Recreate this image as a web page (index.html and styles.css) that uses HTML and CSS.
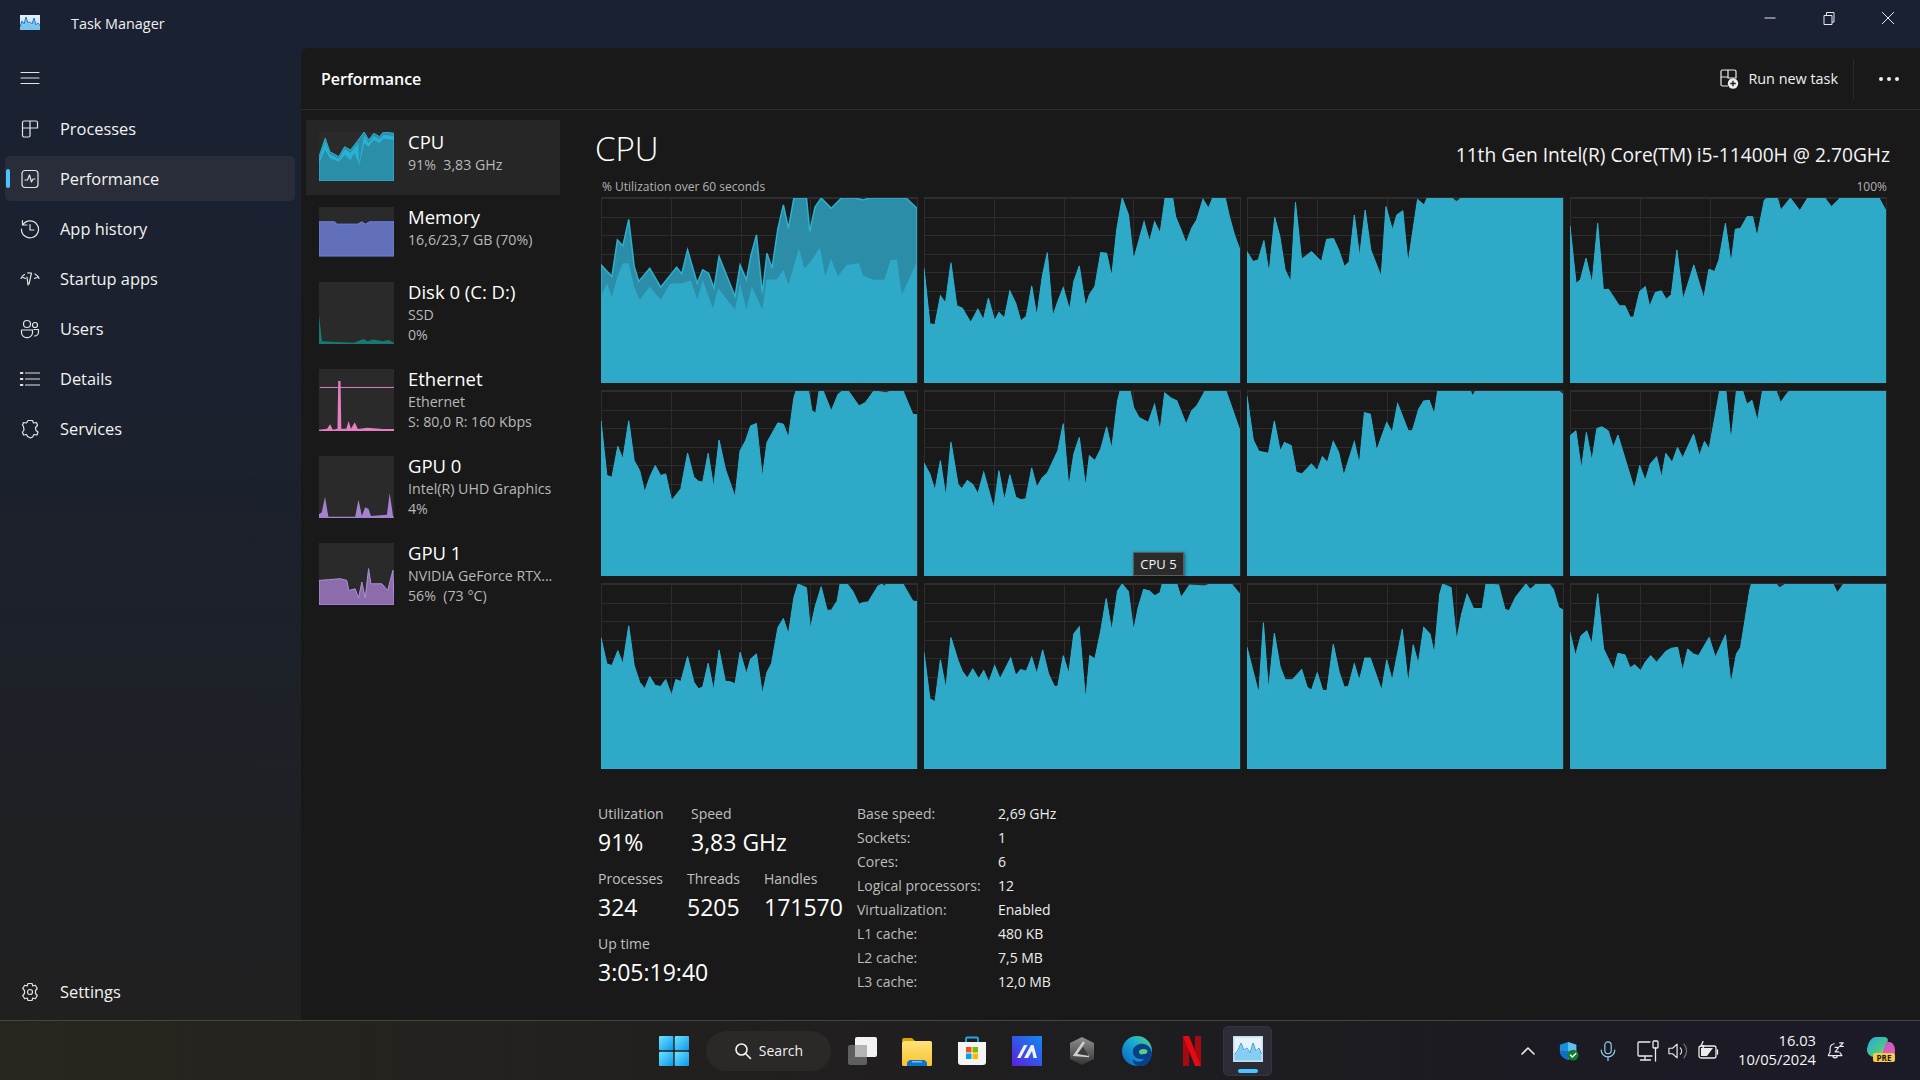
FILE: index.html
```html
<!DOCTYPE html>
<html lang="en">
<head>
<meta charset="utf-8">
<title>Task Manager</title>
<link rel="stylesheet" href="styles.css">
</head>
<body>
<svg class="defs" aria-hidden="true">
  <defs>
    <linearGradient id="winG" x1="0" y1="0" x2="1" y2="1"><stop offset="0" stop-color="#6fe3fb"/><stop offset="1" stop-color="#0c97ee"/></linearGradient>
    <linearGradient id="folderG" x1="0" y1="0" x2="0" y2="1"><stop offset="0" stop-color="#ffe27a"/><stop offset="1" stop-color="#f8c22e"/></linearGradient>
    <linearGradient id="mG" x1="0" y1="1" x2="1" y2="0"><stop offset="0" stop-color="#5a1fe0"/><stop offset="1" stop-color="#0f8bf0"/></linearGradient>
    <linearGradient id="edgeG" x1="0" y1="1" x2="1" y2="0"><stop offset="0" stop-color="#0c5fb8"/><stop offset=".55" stop-color="#17a6d8"/><stop offset="1" stop-color="#55d67a"/></linearGradient>
    <linearGradient id="hexG" x1="0" y1="0" x2="0" y2="1"><stop offset="0" stop-color="#8f8f8f"/><stop offset="1" stop-color="#343434"/></linearGradient>
    <linearGradient id="copA" x1="0" y1="0" x2="1" y2="1"><stop offset="0" stop-color="#2aa7e8"/><stop offset=".6" stop-color="#45c88a"/><stop offset="1" stop-color="#e4d33a"/></linearGradient>
    <linearGradient id="copB" x1="0" y1="0" x2="1" y2="1"><stop offset="0" stop-color="#b45be8"/><stop offset="1" stop-color="#f0609a"/></linearGradient>
    <linearGradient id="tmG" x1="0" y1="0" x2="0" y2="1"><stop offset="0" stop-color="#e4f0f8"/><stop offset="1" stop-color="#b9d6ea"/></linearGradient>
  </defs>
</svg>

<div class="app">
  <div class="window">
    <header class="titlebar">
      <svg class="app-icon" viewBox="0 0 20 15"><rect width="20" height="15" fill="url(#tmG)"/><polygon points="0,13 2,7 4,10 6,3 8,9 10,8 12,10 14,4 16,11 18,9 20,12 20,15 0,15" fill="#7cc4ee"/><polyline points="0,12 2,6 4,9 6,2 8,8 10,7 12,9 14,3 16,10 18,8 20,11" fill="none" stroke="#1c78d4" stroke-width="1"/></svg>
      <span class="app-title">Task Manager</span>
      <div class="win-controls">
        <svg class="win-btn" viewBox="0 0 16 16"><path d="M2.500 8h11" /></svg>
        <svg class="win-btn" viewBox="0 0 16 16"><path d="M3 5.500h8v9H3zM5.500 5.500V2.500H13v9.500h-2"/></svg>
        <svg class="win-btn" viewBox="0 0 16 16"><path d="M2 2l12 12M14 2L2 14"/></svg>
      </div>
    </header>

    <div class="body">
      <nav class="sidebar">
        <div class="hamburger">
          <svg class="nav-icon" viewBox="0 0 20 20"><path d="M1 4.500h18M1 10h18M1 15.500h18"/></svg>
        </div>
        <ul class="nav-list">
          <li class="nav-item">
            <svg class="nav-icon" viewBox="0 0 20 20"><path d="M2.500 3.500a1.500 1.500 0 0 1 1.500-1.500h12a1.500 1.500 0 0 1 1.500 1.500v5.500h-7.500v-7M2.500 3.500v13a1.500 1.500 0 0 0 1.500 1.500h4.500a1.500 1.500 0 0 0 1.500-1.500v-7.500H2.500"/></svg>
            <span>Processes</span>
          </li>
          <li class="nav-item active">
            <svg class="nav-icon" viewBox="0 0 20 20"><rect x="2" y="1.500" width="16" height="17" rx="3"/><path d="M5 11h2.500l2-5 2 7 1.500-3h2"/></svg>
            <span>Performance</span>
          </li>
          <li class="nav-item">
            <svg class="nav-icon" viewBox="0 0 20 20"><path d="M3 5.500a8.500 8.500 0 1 1-1.500 4.500M2.500 1.500v4.500h4.500M10 5.500V11h4"/></svg>
            <span>App history</span>
          </li>
          <li class="nav-item">
            <svg class="nav-icon" viewBox="0 0 20 20"><path d="M1 9.500A9 9 0 0 1 4.500 5.500M19 9.500A9 9 0 0 0 15 5M7.500 4a8 8 0 0 1 3 0M11.500 4L9 15M7 8l1 8M3 8.500l2.500 1M17 8.500l-2.500 1"/></svg>
            <span>Startup apps</span>
          </li>
          <li class="nav-item">
            <svg class="nav-icon" viewBox="0 0 20 20"><circle cx="7" cy="5" r="3.500"/><circle cx="15" cy="6" r="2.500"/><path d="M1.500 11h11v3a5 5 0 0 1-5.500 4.500 5 5 0 0 1-5.500-4.500zM14 10.500h4.500v2.500a4 4 0 0 1-4 4"/></svg>
            <span>Users</span>
          </li>
          <li class="nav-item">
            <svg class="nav-icon" viewBox="0 0 20 20"><path d="M5.500 4H19.500M5.500 10H19.500M5.500 16H19.500"/><path class="dots" d="M.5 4h2M.5 10h2M.5 16h2"/></svg>
            <span>Details</span>
          </li>
          <li class="nav-item">
            <svg class="nav-icon" viewBox="0 0 20 20"><path d="M8 1.500h4.500l1 2.500 3-.5 1 3-2 2 .5 3 2 1.500-1 3-3-.5-1.500 2.500-2 1-3-1.500-1-2-3 .5-1-3 1.500-2-.5-3.500L2.500 6l1-2.500 3 .5z"/></svg>
            <span>Services</span>
          </li>
        </ul>
        <div class="nav-item settings">
          <svg class="nav-icon" viewBox="0 0 20 20"><circle cx="10" cy="10" r="2.500"/><path d="M8 1.500h4l.8 2.500 2.500-.8 2 3.300-1.800 2 0 3 1.800 2-2 3.300-2.500-.8-.8 2.500H8l-.8-2.500-2.500.8-2-3.300 1.800-2 0-3-1.800-2 2-3.300 2.500.8z"/></svg>
          <span>Settings</span>
        </div>
      </nav>

      <main class="panel">
        <div class="panel-head">
          <h1 class="panel-title">Performance</h1>
          <div class="panel-actions">
            <svg class="run-icon" viewBox="0 0 20 20"><path d="M2 12V2.500A1.500 1.500 0 0 1 3.500 1h12A1.500 1.500 0 0 1 17 2.500V9H9V1M2 8h7M2 9v6.500A1.500 1.500 0 0 0 3.500 17H9"/><circle class="run-plus-bg" cx="14" cy="14.500" r="5.200"/><path class="run-plus" d="M14 11.800v5.400M11.300 14.500h5.400"/></svg>
            <span class="run-text">Run new task</span>
            <span class="divider"></span>
            <span class="more"><i></i><i></i><i></i></span>
          </div>
        </div>

        <div class="panel-body">
          <aside class="list">
            <div class="list-item selected">
              <svg class="thumb thumb-s" viewBox="834 396 193 147" preserveAspectRatio="none">
                <polygon class="cpu-back" points="834,470 850,415 862,455 885,470 900,440 915,450 935,420 950,396 962,420 975,400 990,410 1000,396 1027,400 1027,543 834,543"/>
                <polygon class="cpu-front" points="834,478 850,425 862,462 885,476 900,448 915,458 935,428 937,490 950,404 962,428 975,408 990,418 1000,404 1027,408 1027,420 1000,416 990,430 975,420 962,440 950,430 938,495 925,460 915,480 900,465 885,485 862,475 850,450 834,490"/>
              </svg>
              <div class="item-text"><div class="item-title">CPU</div><div class="item-sub">91%&nbsp; 3,83 GHz</div></div>
            </div>
            <div class="list-item">
              <svg class="thumb thumb-m" viewBox="834 621 195 149" preserveAspectRatio="none">
                <polygon class="mem" points="834,665 875,665 880,672 935,672 945,665 955,672 965,665 1029,665 1029,767 834,767"/>
              </svg>
              <div class="item-text"><div class="item-title">Memory</div><div class="item-sub">16,6/23,7 GB (70%)</div></div>
            </div>
            <div class="list-item tall">
              <svg class="thumb thumb-l" viewBox="834 846 195 184" preserveAspectRatio="none">
                <polygon class="disk" points="834,945 842,1022 925,1026 950,1015 960,1022 975,1017 1000,1022 1015,1018 1029,1026 1029,1030 834,1030"/>
              </svg>
              <div class="item-text"><div class="item-title">Disk 0 (C: D:)</div><div class="item-sub">SSD</div><div class="item-sub">0%</div></div>
            </div>
            <div class="list-item tall">
              <svg class="thumb thumb-l" viewBox="834 1107 195 185" preserveAspectRatio="none">
                <polygon class="net" points="834,1288 855,1285 863,1272 870,1288 882,1285 884,1143 890,1143 892,1285 905,1285 911,1262 917,1285 927,1266 935,1286 960,1282 1000,1286 1029,1286 1029,1292 834,1292"/>
                <path class="net-line" d="M836 1162H1029"/>
              </svg>
              <div class="item-text"><div class="item-title">Ethernet</div><div class="item-sub">Ethernet</div><div class="item-sub">S: 80,0 R: 160 Kbps</div></div>
            </div>
            <div class="list-item tall">
              <svg class="thumb thumb-l" viewBox="57 48 224 184" preserveAspectRatio="none">
                <polygon class="gpu0" points="57,220 65,216 75,170 85,228 165,228 175,178 185,225 195,200 205,205 212,226 260,222 268,158 278,225 281,232 57,232"/>
              </svg>
              <div class="item-text"><div class="item-title">GPU 0</div><div class="item-sub">Intel(R) UHD Graphics</div><div class="item-sub">4%</div></div>
            </div>
            <div class="list-item tall">
              <svg class="thumb thumb-l" viewBox="57 309 224 184" preserveAspectRatio="none">
                <polygon class="gpu1" points="57,420 85,418 120,415 140,420 146,450 165,445 175,472 185,425 195,472 205,385 212,430 245,430 262,450 278,390 281,493 57,493"/>
              </svg>
              <div class="item-text"><div class="item-title">GPU 1</div><div class="item-sub">NVIDIA GeForce RTX...</div><div class="item-sub">56%&nbsp; (73 °C)</div></div>
            </div>
          </aside>

          <section class="detail">
            <div class="detail-head">
              <h2 class="detail-title">CPU</h2>
              <div class="detail-model">11th Gen Intel(R) Core(TM) i5-11400H @ 2.70GHz</div>
            </div>
            <div class="caption"><span>% Utilization over 60 seconds</span><span>100%</span></div>
            <div class="graphs">
              <div class="graph"><svg class="plot" viewBox="26 234 752 556" preserveAspectRatio="none">
                <polygon class="area-back" points="26,435 52,470 65,360 78,378 92,298 105,440 116,485 142,445 168,502 206,442 218,462 232,390 255,490 268,450 282,460 295,505 307,410 345,530 357,435 372,480 383,405 396,345 410,520 421,400 433,445 447,325 460,255 472,325 485,234 515,234 523,335 535,262 550,234 574,265 598,234 630,234 650,240 665,234 752,234 778,265 778,790 26,790"/>
                <polygon class="area-soft" points="26,530 40,490 52,530 65,470 78,430 92,430 105,500 118,540 142,500 168,540 190,492 218,490 240,482 255,540 268,480 292,565 305,505 345,570 357,490 372,570 385,500 410,570 420,480 445,478 460,450 472,495 497,385 510,445 525,425 547,382 560,470 573,415 590,470 610,435 640,430 650,468 675,480 700,480 715,420 730,418 742,525 778,425 778,790 26,790"/>
              </svg></div>
              <div class="graph"><svg class="plot" viewBox="794 234 751 556" preserveAspectRatio="none">
                <polygon class="area" points="794,445 808,612 820,615 833,528 845,550 858,428 872,558 885,565 905,608 922,568 935,600 947,535 962,603 972,578 985,595 998,513 1012,550 1024,603 1037,590 1050,498 1062,590 1075,470 1087,398 1100,590 1112,545 1125,503 1140,570 1150,485 1163,438 1178,560 1187,525 1200,500 1214,398 1228,400 1240,470 1252,330 1265,234 1280,285 1292,420 1317,305 1330,365 1342,305 1355,340 1367,234 1385,234 1392,290 1405,330 1417,370 1430,325 1442,300 1457,238 1470,265 1480,234 1510,234 1520,290 1532,345 1545,390 1545,790 794,790"/>
              </svg></div>
              <div class="graph"><svg class="plot" viewBox="16 594 730 556" preserveAspectRatio="none">
                <polygon class="area" points="16,755 30,785 42,780 55,722 67,820 80,652 92,710 104,810 117,845 128,607 142,778 165,755 188,785 200,718 216,716 228,750 241,800 252,785 264,645 276,770 289,630 302,750 326,830 337,620 352,690 362,645 376,632 388,790 410,598 425,615 432,594 490,594 500,605 510,594 746,594 746,1150 16,1150"/>
              </svg></div>
              <div class="graph"><svg class="plot" viewBox="761 594 730 556" preserveAspectRatio="none">
                <polygon class="area" points="761,678 775,850 785,840 798,775 812,850 825,670 838,870 850,868 875,918 888,918 900,952 908,952 922,875 935,860 945,920 958,878 972,873 983,898 995,885 1008,750 1022,900 1047,795 1070,895 1082,808 1095,815 1105,780 1120,670 1133,790 1143,688 1155,685 1170,650 1183,650 1193,710 1210,600 1217,594 1240,594 1248,630 1270,594 1292,632 1310,594 1350,594 1365,620 1385,594 1475,594 1488,625 1491,630 1491,1150 761,1150"/>
              </svg></div>
              <div class="graph"><svg class="plot" viewBox="26 30 752 558" preserveAspectRatio="none">
                <polygon class="area" points="26,120 40,285 52,290 66,197 78,235 92,120 105,240 118,270 130,335 142,290 155,255 168,285 180,280 194,360 216,325 232,217 247,290 258,302 268,305 281,218 294,320 307,178 322,265 345,350 357,210 370,180 382,135 396,128 410,290 421,185 447,126 460,130 472,170 485,50 490,30 520,30 528,90 537,97 545,30 555,30 574,90 590,40 600,30 615,30 640,75 655,65 675,30 705,35 715,30 745,30 768,100 778,102 778,588 26,588"/>
              </svg></div>
              <div class="graph"><svg class="plot" viewBox="794 30 751 558" preserveAspectRatio="none">
                <polygon class="area" points="794,248 808,280 820,330 833,240 846,350 858,183 875,312 884,325 897,300 910,312 922,340 936,275 960,385 972,270 985,360 998,282 1012,350 1024,358 1036,355 1050,262 1062,320 1075,292 1087,278 1112,210 1125,128 1138,320 1150,220 1163,170 1178,320 1187,225 1200,240 1214,205 1228,138 1240,205 1254,60 1260,30 1284,30 1292,80 1305,110 1327,125 1342,70 1355,150 1366,36 1380,50 1395,60 1417,130 1430,90 1442,75 1462,30 1512,30 1545,150 1545,588 794,588"/>
              </svg></div>
              <div class="graph"><svg class="plot" viewBox="17 30 751 558" preserveAspectRatio="none">
                <polygon class="area" points="17,45 32,178 45,212 68,218 82,120 96,212 106,185 122,195 134,275 148,280 170,250 184,270 196,228 208,245 222,182 235,215 247,285 272,183 284,250 296,95 310,100 325,210 349,125 362,155 375,68 400,150 410,150 425,85 437,60 450,58 462,100 470,30 548,30 553,45 560,30 758,30 768,40 768,588 17,588"/>
              </svg></div>
              <div class="graph"><svg class="plot" viewBox="784 30 752 558" preserveAspectRatio="none">
                <polygon class="area" points="784,165 798,150 811,265 823,155 836,240 848,143 860,138 875,150 887,200 898,163 937,325 950,255 963,300 975,250 990,228 1002,290 1012,218 1027,245 1040,200 1052,232 1078,160 1092,225 1104,182 1115,205 1140,30 1155,30 1167,180 1180,30 1195,30 1205,70 1217,58 1230,120 1242,30 1275,30 1285,65 1300,38 1306,30 1536,30 1536,588 784,588"/>
              </svg></div>
              <div class="graph"><svg class="plot" viewBox="26 609 752 558" preserveAspectRatio="none">
                <polygon class="area" points="26,772 40,850 52,855 66,810 78,850 92,735 105,855 118,905 130,925 142,888 155,915 168,918 180,897 194,945 204,897 216,903 232,828 247,905 258,925 268,920 281,848 294,930 307,808 322,903 332,903 345,910 357,815 372,880 382,835 396,820 410,940 421,875 432,848 447,740 460,713 472,760 485,650 495,609 515,620 524,745 535,680 550,617 564,688 574,688 588,660 595,609 612,609 625,630 640,670 650,665 662,663 685,615 695,609 700,616 705,609 745,609 768,660 778,662 778,1167 26,1167"/>
              </svg></div>
              <div class="graph"><svg class="plot" viewBox="794 609 751 558" preserveAspectRatio="none">
                <polygon class="area" points="794,815 808,955 820,965 833,838 846,925 858,770 875,840 885,872 897,893 910,865 924,895 936,870 948,905 962,855 975,895 1000,832 1012,885 1024,867 1037,872 1050,830 1062,880 1076,808 1090,880 1104,918 1112,917 1125,825 1138,880 1150,760 1163,738 1178,960 1188,825 1200,835 1214,750 1227,652 1240,750 1254,630 1265,609 1280,632 1292,750 1303,680 1316,625 1330,630 1342,645 1355,635 1360,609 1395,609 1405,650 1425,612 1460,615 1475,609 1525,609 1545,640 1545,1167 794,1167"/>
              </svg></div>
              <div class="graph"><svg class="plot" viewBox="17 609 751 558" preserveAspectRatio="none">
                <polygon class="area" points="17,800 45,940 56,725 68,930 82,757 96,860 108,898 125,898 147,867 160,920 170,930 184,877 197,930 207,930 222,790 236,875 248,920 258,918 272,850 284,900 297,832 310,832 337,930 349,838 362,900 386,745 400,910 412,792 424,850 437,740 452,760 462,820 475,640 482,609 502,620 515,780 527,700 540,640 555,682 576,684 585,609 615,612 630,685 640,690 655,650 680,609 690,625 705,609 735,609 745,625 758,680 768,688 768,1167 17,1167"/>
              </svg></div>
              <div class="graph"><svg class="plot" viewBox="784 609 752 558" preserveAspectRatio="none">
                <polygon class="area" points="784,755 797,825 810,765 824,750 836,790 850,638 864,805 888,868 898,818 915,823 927,862 938,852 952,870 963,845 976,825 990,845 1012,812 1025,803 1040,800 1052,870 1064,805 1078,820 1090,825 1115,770 1130,830 1154,762 1167,910 1180,820 1190,800 1212,625 1216,609 1275,609 1283,620 1297,609 1410,609 1420,635 1435,609 1536,609 1536,1167 784,1167"/>
              </svg></div>
              <div class="tooltip">CPU 5</div>
            </div>

            <div class="stats">
              <div class="stat-block">
                <div class="stat-row">
                  <div class="stat col-util"><div class="stat-label">Utilization</div><div class="stat-value">91%</div></div>
                  <div class="stat"><div class="stat-label">Speed</div><div class="stat-value">3,83 GHz</div></div>
                </div>
                <div class="stat-row">
                  <div class="stat col-proc"><div class="stat-label">Processes</div><div class="stat-value">324</div></div>
                  <div class="stat col-thread"><div class="stat-label">Threads</div><div class="stat-value">5205</div></div>
                  <div class="stat"><div class="stat-label">Handles</div><div class="stat-value">171570</div></div>
                </div>
                <div class="stat-row">
                  <div class="stat"><div class="stat-label">Up time</div><div class="stat-value">3:05:19:40</div></div>
                </div>
              </div>
              <dl class="specs">
                <dt>Base speed:</dt><dd>2,69 GHz</dd>
                <dt>Sockets:</dt><dd>1</dd>
                <dt>Cores:</dt><dd>6</dd>
                <dt>Logical processors:</dt><dd>12</dd>
                <dt>Virtualization:</dt><dd>Enabled</dd>
                <dt>L1 cache:</dt><dd>480 KB</dd>
                <dt>L2 cache:</dt><dd>7,5 MB</dd>
                <dt>L3 cache:</dt><dd>12,0 MB</dd>
              </dl>
            </div>
          </section>
        </div>
      </main>
    </div>
  </div>

  <footer class="taskbar">
    <div class="tb-center">
      <div class="tb-slot">
        <svg class="tb-icon start" viewBox="0 0 30 30"><rect x="0" y="0" width="14.300" height="14.300" rx="1" fill="url(#winG)"/><rect x="15.700" y="0" width="14.300" height="14.300" rx="1" fill="url(#winG)"/><rect x="0" y="15.700" width="14.300" height="14.300" rx="1" fill="url(#winG)"/><rect x="15.700" y="15.700" width="14.300" height="14.300" rx="1" fill="url(#winG)"/></svg>
      </div>
      <div class="search">
        <svg class="search-icon" viewBox="0 0 18 18"><circle cx="7.500" cy="7.500" r="5.500"/><path d="M11.500 11.500L16.500 16.500"/></svg>
        <span>Search</span>
      </div>
      <div class="tb-slot">
        <svg class="tb-icon" viewBox="0 0 30 30"><rect x="1" y="9" width="19" height="20" rx="2" fill="#5f5f5f"/><rect x="8" y="1" width="22" height="20" rx="2" fill="#f3f3f3"/><rect x="8" y="9" width="12" height="12" fill="#b4b4b4"/></svg>
      </div>
      <div class="tb-slot">
        <svg class="tb-icon" viewBox="0 0 30 30"><path d="M0 4a2 2 0 0 1 2-2h8l3 3h-13z" fill="#e0a000"/><rect x="0" y="5" width="30" height="25" rx="1.500" fill="url(#folderG)"/><path d="M5 27a2 2 0 0 1 2-2v-1h16v1a2 2 0 0 1 2 2v3H5z" fill="#1073c8"/><rect x="10" y="25" width="10" height="1.500" fill="#6fc0f0"/></svg>
      </div>
      <div class="tb-slot">
        <svg class="tb-icon" viewBox="0 0 30 30"><path d="M9 6V2.500a1 1 0 0 1 1-1h10a1 1 0 0 1 1 1V6" fill="none" stroke="#1fa8e8" stroke-width="1.800"/><path d="M1 6h28v20a3 3 0 0 1-3 3H4a3 3 0 0 1-3-3z" fill="#f4f4f4"/><rect x="9" y="11" width="5.500" height="5.500" fill="#f25022"/><rect x="15.500" y="11" width="5.500" height="5.500" fill="#7fba00"/><rect x="9" y="17.500" width="5.500" height="5.500" fill="#00a4ef"/><rect x="15.500" y="17.500" width="5.500" height="5.500" fill="#ffb900"/></svg>
      </div>
      <div class="tb-slot">
        <svg class="tb-icon" viewBox="0 0 30 30"><rect width="30" height="30" fill="url(#mG)"/><path d="M5 22L12 9h3.500L8.500 22zM12 22L19 9h2.500L25 22h-3.500L20 15 16 22z" fill="#eef2ff"/></svg>
      </div>
      <div class="tb-slot">
        <svg class="tb-icon" viewBox="0 0 30 30"><polygon points="15,1 27,7 27,23 15,29 3,23 3,7" fill="url(#hexG)"/><path d="M17 6L8 19l14 1" fill="none" stroke="#cfcfcf" stroke-width="2.500"/><polygon points="16,11 22,20 11,18" fill="#3a3a3a"/></svg>
      </div>
      <div class="tb-slot">
        <svg class="tb-icon" viewBox="0 0 30 30"><circle cx="15" cy="15" r="15" fill="url(#edgeG)"/><path d="M30 17c-1-7-7-10-12-9-5 1-8 5-7 9 1 5 6 7 11 6-3 4-9 3-11 0-1 5 5 9 11 7 5-2 8-8 8-13z" fill="#0a3f8a"/><path d="M17 16c0-3 5-4 8-2 1 2 0 4-3 4-3 1-5 0-5-2z" fill="#57d27c"/></svg>
      </div>
      <div class="tb-slot">
        <svg class="tb-icon netflix" viewBox="0 0 18 30"><path d="M0 0h6v30l-6 0z" fill="#a8080f"/><path d="M12 0h6v30h-6z" fill="#a8080f"/><path d="M0 0h6l12 30h-6z" fill="#e50914"/></svg>
      </div>
      <div class="tb-active">
        <svg class="tb-icon tm" viewBox="0 0 30 26"><rect width="30" height="26" fill="#c6dcec"/><rect x="1.500" y="1.500" width="27" height="23" fill="#e9f3fa"/><polygon points="1.500,20 5,15 8,8 11,15 14,13 17,18 20,8 23,16 26,13 28.500,19 28.500,24.500 1.500,24.500" fill="#86cdf4"/><polyline points="1.500,19 5,14 8,7 11,14 14,12 17,17 20,7 23,15 26,12 28.500,18" fill="none" stroke="#36a2e4" stroke-width="1"/></svg>
        <span class="active-bar"></span>
      </div>
    </div>

    <div class="tray">
      <svg class="tray-icon chev" viewBox="0 0 16 16"><path d="M2 11l6-6 6 6"/></svg>
      <svg class="tray-icon shield" viewBox="0 0 22 22"><path d="M10 1l9 3v7c0 5-4 8-9 10-5-2-9-5-9-10V4z" fill="#1a8fdc"/><path d="M10 1l9 3v7H10z" fill="#60c0f0"/><path d="M1 11h9v10c-5-2-9-5-9-10z" fill="#0f6fc0"/><circle cx="15.500" cy="15.500" r="6" fill="#107c2e"/><path class="check" d="M12.500 15.500l2.200 2.200 3.800-4"/></svg>
      <svg class="tray-icon mic" viewBox="0 0 20 22"><rect x="6.500" y="1" width="7" height="13" rx="3.500"/><path d="M2.500 10a7.500 7.500 0 0 0 15 0M10 17.500V22"/></svg>
      <svg class="tray-icon net-ic" viewBox="0 0 22 22"><path d="M13 2H2a1 1 0 0 0-1 1v12a1 1 0 0 0 1 1h13M8 16v3.500M3.500 20h10"/><rect x="16" y="1" width="5" height="7" rx="1"/><path d="M18.500 8v13"/></svg>
      <svg class="tray-icon vol" viewBox="0 0 22 22"><path d="M1 8h4l5-4.500v15L5 14H1zM13.500 7.500a5 5 0 0 1 0 7"/><path class="dim" d="M17.500 3.500a11 11 0 0 1 0 15"/></svg>
      <svg class="tray-icon batt" viewBox="0 0 22 22"><rect x="1" y="6" width="17" height="12" rx="2"/><path class="fill" d="M3 8h12L9 16H3z"/><path d="M19.500 10v4"/><path d="M5 1.500L3 6h3l-1.500 3"/></svg>
      <div class="clock"><div>16.03</div><div>10/05/2024</div></div>
      <svg class="tray-icon bell" viewBox="0 0 20 22"><path d="M8 3a5.500 5.500 0 0 0-4.500 5.500V12L1.500 16h15L14.500 13M6.500 16a2.500 2.500 0 0 0 5 0M9 7h4l-4 5h4M14 2h4l-4 4h4"/></svg>
      <div class="copilot">
        <svg class="cop-svg" viewBox="0 0 30 24"><path d="M10 1h8a4 4 0 0 1 4 3l-6 17H8a7 7 0 0 1-7-8c1-6 4-12 9-12z" fill="url(#copA)"/><path d="M20 6h3c4 0 6 4 6 9s-3 8-8 8h-9a4 4 0 0 1-3-2h6l5-15z" fill="url(#copB)"/></svg>
        <span class="pre">PRE</span>
      </div>
    </div>
  </footer>
</div>
</body>
</html>
```

FILE: styles.css
```css
* { box-sizing: border-box; }
html, body { margin: 0; height: 100%; }
body {
  font-family: "Open Sans", "Noto Sans", "Liberation Sans", sans-serif;
  color: #fff;
  background: #191919;
  overflow: hidden;
}
h1, h2, ul, dl, dd { margin: 0; padding: 0; }
ul { list-style: none; }

.defs { position: absolute; width: 0; height: 0; }

.app { width: 1920px; height: 1080px; display: flex; flex-direction: column; }
.window {
  height: 1020px;
  display: flex;
  flex-direction: column;
  background: linear-gradient(180deg, #1a2132 0, #1b212d 45%, #1f2022 90%, #202020 100%);
}

/* title bar */
.titlebar { height: 48px; flex: none; display: flex; align-items: center; padding: 0 0 0 20px; }
.app-icon { width: 20px; height: 15px; margin-top: -4px; }
.app-title { margin-left: 31px; font-size: 14.400px; color: #f0f0f0; margin-top: -2px; }
.win-controls { margin-left: auto; display: flex; gap: 43px; padding-right: 24px; margin-top: -12px; }
.win-btn { width: 16px; height: 16px; fill: none; stroke: #e6e6e6; stroke-width: 1; }

.body { flex: 1; display: flex; min-height: 0; }

/* sidebar */
.sidebar { width: 301px; flex: none; display: flex; flex-direction: column; padding: 7px 6px 0 5px; }
.hamburger { height: 45px; display: flex; align-items: center; padding-left: 15px; }
.nav-icon { width: 20px; height: 20px; flex: none; fill: none; stroke: #e4e4e4; stroke-width: 1.200; stroke-linecap: round; stroke-linejoin: round; }
.nav-icon .dots { stroke-width: 1.800; }
.nav-list { display: flex; flex-direction: column; gap: 5px; margin-top: 6px; }
.nav-item {
  position: relative;
  height: 45px;
  display: flex;
  align-items: center;
  gap: 20px;
  padding-left: 15px;
  border-radius: 5px;
  font-size: 16.400px;
  color: #f2f2f2;
}
.nav-item.active { background: #282d39; }
.nav-item.active::before {
  content: "";
  position: absolute;
  left: 1px;
  top: 13px;
  width: 4px;
  height: 19px;
  border-radius: 2px;
  background: #4cc2ff;
}
.settings { margin-top: auto; margin-bottom: 6px; }

/* panel */
.panel { flex: 1; min-width: 0; display: flex; flex-direction: column; background: #191919; border-top-left-radius: 8px; }
.panel-head { height: 62px; flex: none; display: flex; align-items: center; padding-left: 20px; border-bottom: 1px solid #2a2e38; padding-right: 0; }
.panel-title { font-size: 16px; font-weight: 600; margin-top: 1px; }
.panel-actions { margin-left: auto; display: flex; align-items: center; }
.run-icon { width: 20px; height: 20px; fill: none; stroke: #eee; stroke-width: 1.200; stroke-linejoin: round; }
.run-plus-bg { fill: #eee; stroke: none; }
.run-plus { stroke: #191919; stroke-width: 1.300; }
.run-text { margin-left: 9px; font-size: 14.400px; color: #f0f0f0; }
.divider { width: 1px; height: 40px; background: #2a2a2a; margin: 0 25px 0 15px; }
.more { display: flex; gap: 4px; margin-right: 21px; }
.more i { width: 4px; height: 4px; border-radius: 50%; background: #f0f0f0; }

.panel-body { flex: 1; display: flex; min-height: 0; }

/* list */
.list { width: 254px; margin-left: 5px; flex: none; padding-top: 10px; }
.list-item { height: 75px; display: flex; padding: 12px 0 0 13px; gap: 14px; }
.list-item.tall { height: 87px; }
.list-item.selected { background: #262626; }
.thumb { width: 75px; flex: none; background: #2a2a2a; display: block; }
.thumb-s { height: 49px; }
.thumb-m { height: 50px; }
.thumb-l { height: 62px; }
.item-text { margin-top: -2px; }
.item-title { font-size: 18.500px; line-height: 24px; color: #fff; margin-bottom: 1px; }
.item-sub { font-size: 14.200px; line-height: 20px; color: #b8b8b8; white-space: nowrap; }
.cpu-back { fill: #2b8ea8; stroke: #2ab3d4; stroke-width: 1; vector-effect: non-scaling-stroke; }
.cpu-front { fill: #29b0d2; }
.mem { fill: #6170b8; stroke: #6c7fe0; stroke-width: 1; vector-effect: non-scaling-stroke; }
.disk { fill: #157a74; }
.net { fill: #e67fc2; }
.net-line { fill: none; stroke: #e67fc2; stroke-width: 1; vector-effect: non-scaling-stroke; }
.gpu0 { fill: #a582d0; }
.gpu1 { fill: #8c6cab; stroke: #b08fdc; stroke-width: 1; vector-effect: non-scaling-stroke; }

/* detail */
.detail { flex: 1; min-width: 0; padding: 17px 30px 0 35px; }
.detail-head { height: 50px; display: flex; justify-content: space-between; align-items: flex-start; }
.detail-title { font-size: 33px; font-weight: 300; line-height: 44px; }
.detail-model { font-size: 19.200px; line-height: 26px; margin-top: 15px; color: #f4f4f4; }
.caption { height: 20px; display: flex; justify-content: space-between; align-items: center; padding: 0 3px 2px 7px; font-size: 12px; color: #b4b4b4; }

.graphs {
  position: relative;
  margin-left: 6px;
  display: grid;
  grid-template-columns: repeat(4, 317px);
  grid-auto-rows: 186px;
  column-gap: 6px;
  row-gap: 7px;
}
.graph {
  border: 1px solid #2d2d2d;
  border-bottom: 0;
  border-left: 0;
  background-color: #191919;
  background-image:
    repeating-linear-gradient(to bottom, #2d2d2d 0 1px, transparent 1px 18.600px),
    repeating-linear-gradient(to right, #2d2d2d 0 1px, transparent 1px 69.800px);
}
.plot { width: 100%; height: 100%; display: block; }
.area { fill: #2ea9c7; stroke: #2db0d0; stroke-width: 1; vector-effect: non-scaling-stroke; }
.area-back { fill: #2b8da8; stroke: #2db0d0; stroke-width: 1.500; vector-effect: non-scaling-stroke; }
.area-soft { fill: #2ea9c7; }
.tooltip {
  position: absolute;
  left: 532px;
  top: 355px;
  width: 51px;
  height: 24px;
  display: flex;
  align-items: center;
  justify-content: center;
  background: #2b2b2b;
  border: 1px solid #5c5c5c;
  box-shadow: 1px 1px 3px rgba(0,0,0,.45);
  font-size: 13px;
  color: #f4f4f4;
}

/* stats */
.stats { display: flex; margin: 35px 0 0 3px; }
.stat-block { width: 259px; flex: none; display: flex; flex-direction: column; gap: 9px; }
.stat-row { display: flex; height: 56px; }
.stat-label { font-size: 14px; line-height: 20px; color: #c0c0c0; }
.stat-value { font-size: 23px; line-height: 36px; color: #fff; white-space: nowrap; }
.col-util { width: 93px; }
.col-proc { width: 89px; }
.col-thread { width: 77px; }
.specs { display: grid; grid-template-columns: 141px auto; grid-auto-rows: 24px; margin-top: -2px; font-size: 14px; line-height: 24px; }
.specs dt { color: #bdbdbd; white-space: nowrap; }
.specs dd { color: #ededed; }

/* taskbar */
.taskbar {
  height: 60px;
  flex: none;
  display: flex;
  align-items: center;
  border-top: 1px solid #47453f;
  background: linear-gradient(90deg, #29261f 0, #22201e 35%, #1d1c20 65%, #1b1a27 100%);
}
.tb-center { display: flex; align-items: center; padding-left: 646px; }
.tb-slot { width: 55px; height: 50px; display: flex; align-items: center; justify-content: center; }
.tb-icon { width: 30px; height: 30px; display: block; }
.netflix { width: 18px; }
.search {
  width: 125px;
  height: 40px;
  margin: 0 3px 0 5px;
  border-radius: 20px;
  background: #2a2927;
  display: flex;
  align-items: center;
  justify-content: center;
  gap: 7px;
  font-size: 14px;
  color: #f0f0f0;
}
.search-icon { width: 18px; height: 18px; fill: none; stroke: #f4f4f4; stroke-width: 1.600; stroke-linecap: round; }
.tb-active {
  position: relative;
  width: 49px;
  height: 50px;
  margin-left: 4px;
  border-radius: 5px;
  background: #2b2c36;
  border: 1px solid #33343e;
  display: flex;
  align-items: center;
  justify-content: center;
}
.tm { height: 26px; margin-top: -4px; }
.active-bar { position: absolute; bottom: 2px; left: 14px; width: 20px; height: 4px; border-radius: 2px; background: #4cc2ff; }

.tray { display: flex; align-items: center; margin-left: 248px; }
.tray-icon { width: 20px; height: 20px; flex: none; fill: none; stroke: #ececec; stroke-width: 1.300; stroke-linecap: round; stroke-linejoin: round; }
.chev { width: 16px; height: 16px; stroke-width: 1.600; }
.shield { width: 20px; height: 20px; margin-left: 23px; stroke: none; }
.shield .check { fill: none; stroke: #fff; stroke-width: 1.500; }
.mic { margin-left: 19px; stroke: #8fd2ee; }
.net-ic { margin-left: 19px; width: 22px; height: 22px; }
.vol { margin-left: 9px; }
.vol .dim { stroke: #777; }
.batt { margin-left: 10px; width: 22px; height: 22px; }
.batt .fill { fill: #ececec; stroke: none; }
.clock { width: 90px; margin-left: 6px; margin-top: -2px; text-align: right; font-size: 14.700px; line-height: 19px; color: #f4f4f4; }
.bell { margin-left: 10px; }
.copilot { position: relative; width: 30px; height: 30px; margin-left: 20px; }
.cop-svg { width: 30px; height: 24px; display: block; }
.pre {
  position: absolute;
  left: 7px;
  top: 17px;
  width: 22px;
  height: 9px;
  border-radius: 2px;
  background: #f7c94a;
  color: #1a1a1a;
  font-size: 8px;
  font-weight: 700;
  line-height: 9px;
  text-align: center;
}
```
